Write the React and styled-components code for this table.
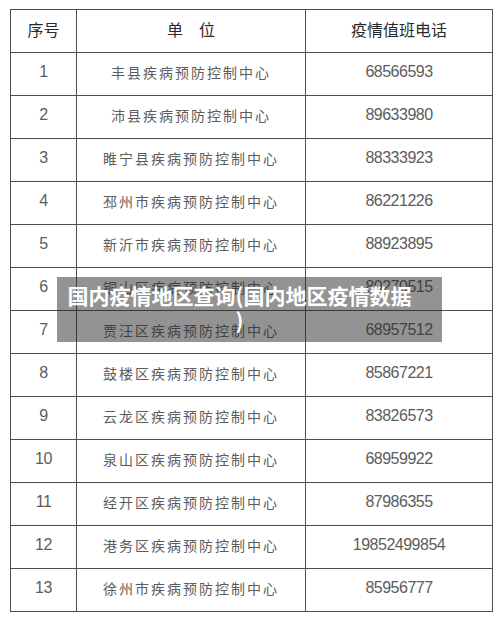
import React from "react";
import styled, { createGlobalStyle } from "styled-components";

const Global = createGlobalStyle`
  html, body { margin: 0; padding: 0; background: #fff; }
  body { font-family: "Noto Sans CJK SC", "Liberation Sans", sans-serif; }
`;

const Page = styled.div`
  position: relative;
  width: 500px;
  height: 621px;
  padding: 9px 0 0 10px;
  box-sizing: border-box;
  background: #fff;
  overflow: hidden;
`;

const Grid = styled.div`
  display: grid;
  grid-template-columns: 66px 229px 187px;
  grid-auto-rows: 43px;
  width: 483px;
  box-sizing: border-box;
  border-top: 1px solid #4d4d4d;
  border-left: 1px solid #4d4d4d;
`;

const Cell = styled.div`
  box-sizing: border-box;
  border-right: 1px solid #4d4d4d;
  border-bottom: 1px solid #4d4d4d;
  display: flex;
  align-items: center;
  justify-content: center;
  padding-bottom: 4px;
  color: ${(p) => (p.$head ? "#2a2a2a" : "#5c5c5c")};
  font-size: ${(p) => (p.$head ? "16px" : "14px")};
  letter-spacing: ${(p) => (p.$spaced ? "2px" : "0")};
  font-family: ${(p) =>
    p.$num
      ? '"Liberation Sans", "Noto Sans CJK SC", sans-serif'
      : '"Noto Sans CJK SC", "Liberation Sans", sans-serif'};
  ${(p) => p.$num && "font-size: 16px; letter-spacing: -0.5px;"}
  white-space: nowrap;
`;

const Banner = styled.div`
  position: absolute;
  left: 57px;
  top: 277px;
  width: 385px;
  height: 65px;
  box-sizing: border-box;
  padding: 6px 30px 0 10px;
  background: rgba(40, 40, 40, 0.5);
  color: #fff;
  font-family: "Noto Sans CJK SC", sans-serif;
  font-weight: 700;
  font-size: 21px;
  line-height: 25px;
  text-align: center;
  line-break: anywhere;
`;

const rows = [
  ["1", "丰县疾病预防控制中心", "68566593"],
  ["2", "沛县疾病预防控制中心", "89633980"],
  ["3", "睢宁县疾病预防控制中心", "88333923"],
  ["4", "邳州市疾病预防控制中心", "86221226"],
  ["5", "新沂市疾病预防控制中心", "88923895"],
  ["6", "铜山区疾病预防控制中心", "80270515"],
  ["7", "贾汪区疾病预防控制中心", "68957512"],
  ["8", "鼓楼区疾病预防控制中心", "85867221"],
  ["9", "云龙区疾病预防控制中心", "83826573"],
  ["10", "泉山区疾病预防控制中心", "68959922"],
  ["11", "经开区疾病预防控制中心", "87986355"],
  ["12", "港务区疾病预防控制中心", "19852499854"],
  ["13", "徐州市疾病预防控制中心", "85956777"],
];

export default function App() {
  return (
    <>
      <Global />
      <Page>
        <Grid>
          <Cell $head>序号</Cell>
          <Cell $head>单　位</Cell>
          <Cell $head>疫情值班电话</Cell>
          {rows.map(([n, unit, tel]) => (
            <React.Fragment key={n}>
              <Cell $num>{n}</Cell>
              <Cell $spaced>{unit}</Cell>
              <Cell $num>{tel}</Cell>
            </React.Fragment>
          ))}
        </Grid>
        <Banner>国内疫情地区查询(国内地区疫情数据)</Banner>
      </Page>
    </>
  );
}
